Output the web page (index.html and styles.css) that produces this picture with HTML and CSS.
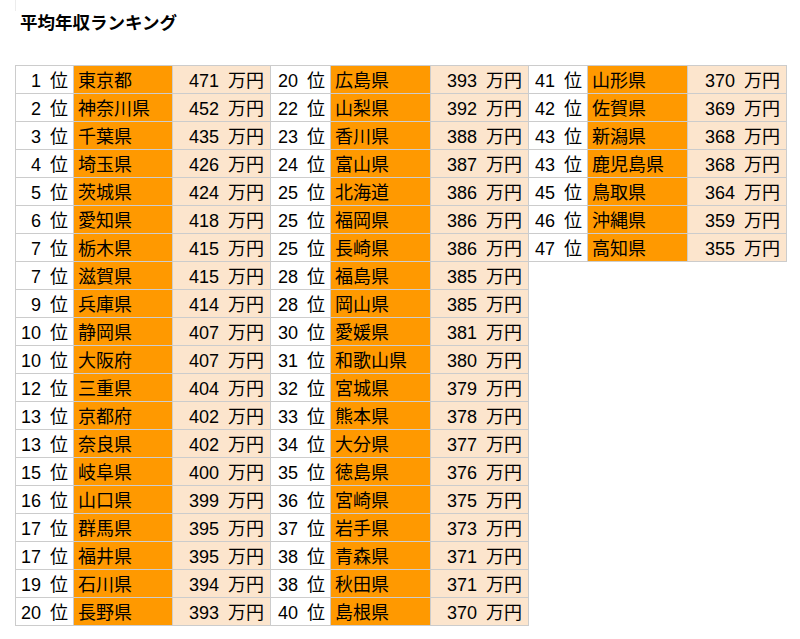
FILE: index.html
```html
<!DOCTYPE html>
<html lang="ja">
<head>
<meta charset="utf-8">
<title>平均年収ランキング</title>
<link rel="stylesheet" href="styles.css">
</head>
<body>
<div class="page">
  <div class="edge"></div>
  <h1 class="title">平均年収ランキング</h1>
  <div class="sheet">
    <div class="row first"><div class="r">1 位</div><div class="n">東京都</div><div class="v">471 万円</div><div class="r">20 位</div><div class="n">広島県</div><div class="v">393 万円</div><div class="r">41 位</div><div class="n">山形県</div><div class="v">370 万円</div></div>
    <div class="row"><div class="r">2 位</div><div class="n">神奈川県</div><div class="v">452 万円</div><div class="r">22 位</div><div class="n">山梨県</div><div class="v">392 万円</div><div class="r">42 位</div><div class="n">佐賀県</div><div class="v">369 万円</div></div>
    <div class="row"><div class="r">3 位</div><div class="n">千葉県</div><div class="v">435 万円</div><div class="r">23 位</div><div class="n">香川県</div><div class="v">388 万円</div><div class="r">43 位</div><div class="n">新潟県</div><div class="v">368 万円</div></div>
    <div class="row"><div class="r">4 位</div><div class="n">埼玉県</div><div class="v">426 万円</div><div class="r">24 位</div><div class="n">富山県</div><div class="v">387 万円</div><div class="r">43 位</div><div class="n">鹿児島県</div><div class="v">368 万円</div></div>
    <div class="row"><div class="r">5 位</div><div class="n">茨城県</div><div class="v">424 万円</div><div class="r">25 位</div><div class="n">北海道</div><div class="v">386 万円</div><div class="r">45 位</div><div class="n">鳥取県</div><div class="v">364 万円</div></div>
    <div class="row"><div class="r">6 位</div><div class="n">愛知県</div><div class="v">418 万円</div><div class="r">25 位</div><div class="n">福岡県</div><div class="v">386 万円</div><div class="r">46 位</div><div class="n">沖縄県</div><div class="v">359 万円</div></div>
    <div class="row"><div class="r">7 位</div><div class="n">栃木県</div><div class="v">415 万円</div><div class="r">25 位</div><div class="n">長崎県</div><div class="v">386 万円</div><div class="r">47 位</div><div class="n">高知県</div><div class="v">355 万円</div></div>
    <div class="row"><div class="r">7 位</div><div class="n">滋賀県</div><div class="v">415 万円</div><div class="r">28 位</div><div class="n">福島県</div><div class="v">385 万円</div><div class="e"></div><div class="e"></div><div class="e"></div></div>
    <div class="row"><div class="r">9 位</div><div class="n">兵庫県</div><div class="v">414 万円</div><div class="r">28 位</div><div class="n">岡山県</div><div class="v">385 万円</div><div class="e"></div><div class="e"></div><div class="e"></div></div>
    <div class="row"><div class="r">10 位</div><div class="n">静岡県</div><div class="v">407 万円</div><div class="r">30 位</div><div class="n">愛媛県</div><div class="v">381 万円</div><div class="e"></div><div class="e"></div><div class="e"></div></div>
    <div class="row"><div class="r">10 位</div><div class="n">大阪府</div><div class="v">407 万円</div><div class="r">31 位</div><div class="n">和歌山県</div><div class="v">380 万円</div><div class="e"></div><div class="e"></div><div class="e"></div></div>
    <div class="row"><div class="r">12 位</div><div class="n">三重県</div><div class="v">404 万円</div><div class="r">32 位</div><div class="n">宮城県</div><div class="v">379 万円</div><div class="e"></div><div class="e"></div><div class="e"></div></div>
    <div class="row"><div class="r">13 位</div><div class="n">京都府</div><div class="v">402 万円</div><div class="r">33 位</div><div class="n">熊本県</div><div class="v">378 万円</div><div class="e"></div><div class="e"></div><div class="e"></div></div>
    <div class="row"><div class="r">13 位</div><div class="n">奈良県</div><div class="v">402 万円</div><div class="r">34 位</div><div class="n">大分県</div><div class="v">377 万円</div><div class="e"></div><div class="e"></div><div class="e"></div></div>
    <div class="row"><div class="r">15 位</div><div class="n">岐阜県</div><div class="v">400 万円</div><div class="r">35 位</div><div class="n">徳島県</div><div class="v">376 万円</div><div class="e"></div><div class="e"></div><div class="e"></div></div>
    <div class="row"><div class="r">16 位</div><div class="n">山口県</div><div class="v">399 万円</div><div class="r">36 位</div><div class="n">宮崎県</div><div class="v">375 万円</div><div class="e"></div><div class="e"></div><div class="e"></div></div>
    <div class="row"><div class="r">17 位</div><div class="n">群馬県</div><div class="v">395 万円</div><div class="r">37 位</div><div class="n">岩手県</div><div class="v">373 万円</div><div class="e"></div><div class="e"></div><div class="e"></div></div>
    <div class="row"><div class="r">17 位</div><div class="n">福井県</div><div class="v">395 万円</div><div class="r">38 位</div><div class="n">青森県</div><div class="v">371 万円</div><div class="e"></div><div class="e"></div><div class="e"></div></div>
    <div class="row"><div class="r">19 位</div><div class="n">石川県</div><div class="v">394 万円</div><div class="r">38 位</div><div class="n">秋田県</div><div class="v">371 万円</div><div class="e"></div><div class="e"></div><div class="e"></div></div>
    <div class="row"><div class="r">20 位</div><div class="n">長野県</div><div class="v">393 万円</div><div class="r">40 位</div><div class="n">島根県</div><div class="v">370 万円</div><div class="e"></div><div class="e"></div><div class="e"></div></div>
  </div>
</div>
</body>
</html>
```

FILE: styles.css
```css
html, body {
  margin: 0;
  padding: 0;
  background: #ffffff;
}

.page {
  padding-left: 15px;
  font-family: "Liberation Sans", Arial, "Noto Sans CJK JP", sans-serif;
  color: #000000;
}

.edge {
  height: 11px;
  border-left: 1px solid #ececec;
}

.title {
  margin: 0;
  padding-left: 5px;
  height: 24px;
  line-height: 24px;
  font-size: 17.5px;
  font-weight: bold;
  font-family: "Liberation Sans", "Noto Sans CJK JP", sans-serif;
}

.sheet {
  margin-top: 30px;
  display: grid;
  grid-template-columns: 59px 99px 98px 60px 100px 98px 59px 100px 99px;
  width: max-content;
  font-size: 18px;
}

.row {
  display: contents;
}

.row > div {
  box-sizing: border-box;
  height: 28px;
  padding-top: 4px;
  line-height: 23px;
  white-space: nowrap;
  overflow: hidden;
  border-right: 1px solid #cccccc;
  border-bottom: 1px solid #cccccc;
  word-spacing: 4px;
}

.row.first > div {
  height: 29px;
  border-top: 1px solid #cccccc;
}

.row > div:first-child {
  border-left: 1px solid #cccccc;
}

.r {
  background: #ffffff;
  text-align: right;
  padding-right: 5px;
}

.n {
  background: #ff9900;
  text-align: left;
  padding-left: 4px;
}

.v {
  background: #fce5cd;
  text-align: right;
  padding-right: 6px;
}

.row > .e {
  background: transparent;
  border: none;
}
```
